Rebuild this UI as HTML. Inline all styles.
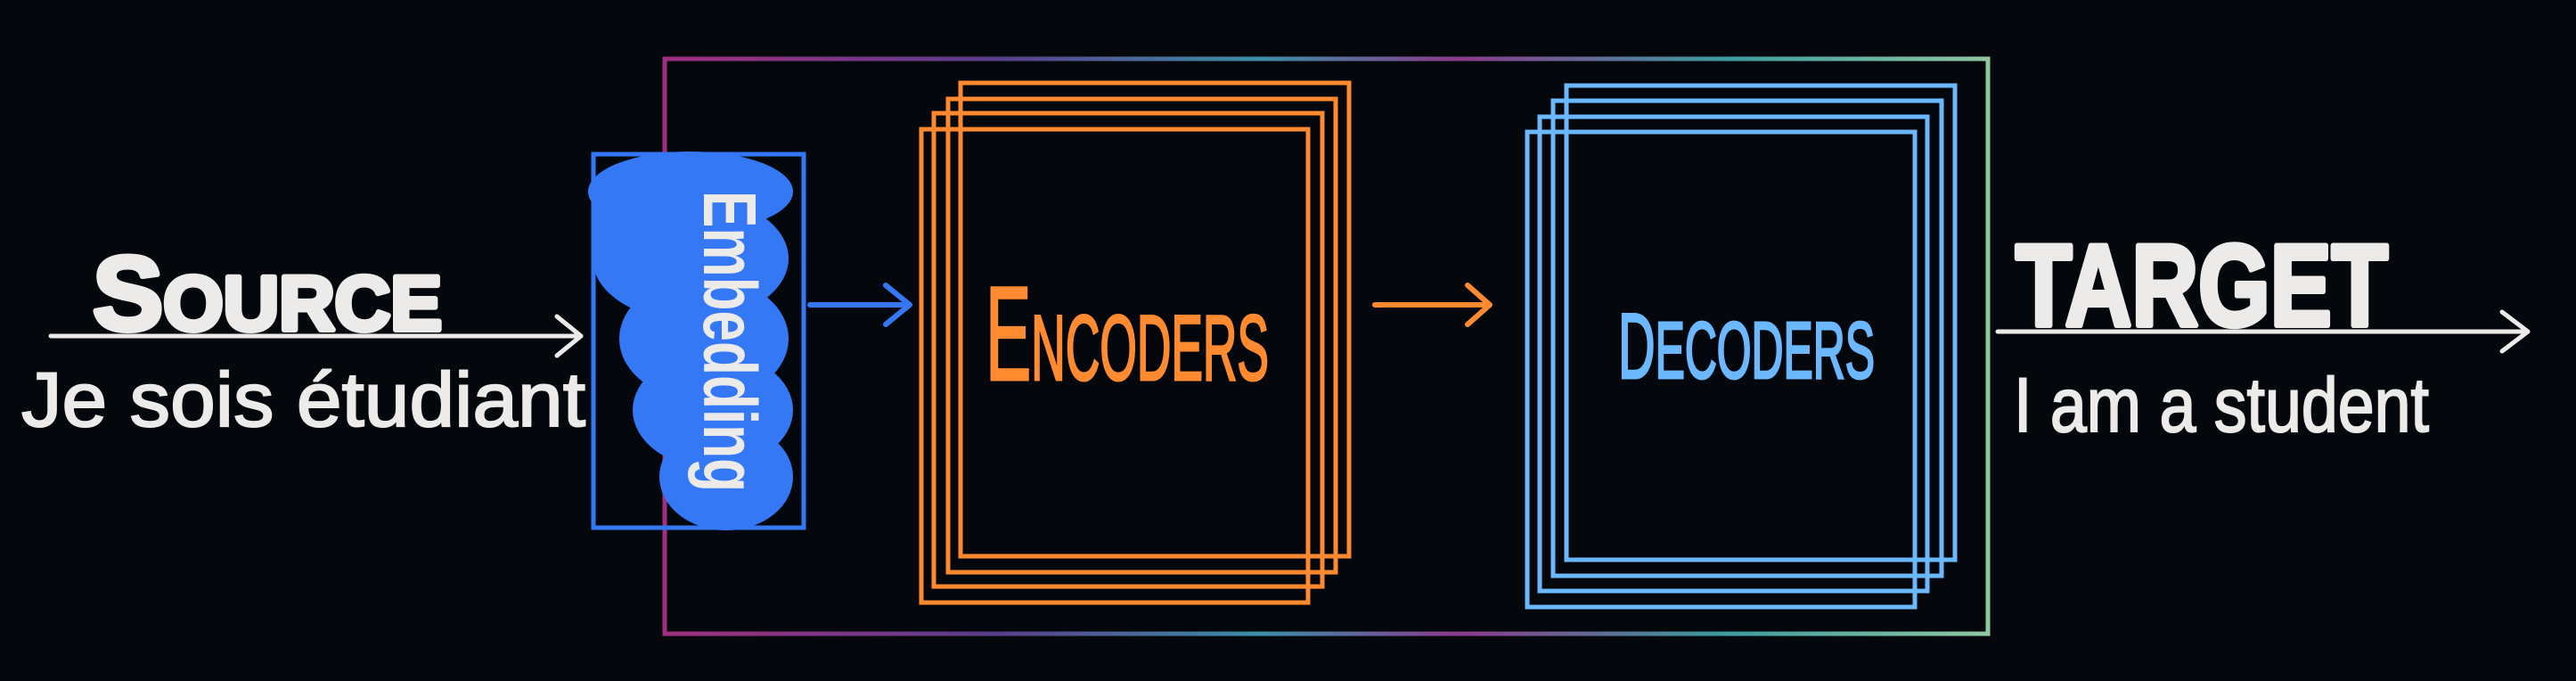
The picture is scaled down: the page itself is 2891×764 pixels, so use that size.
<!DOCTYPE html>
<html><head><meta charset="utf-8"><style>
html,body{margin:0;padding:0;background:#04070c;}
svg{display:block}
text{font-family:"Liberation Sans",sans-serif;}
</style></head><body>
<svg width="2891" height="764" viewBox="0 0 2891 764" xmlns="http://www.w3.org/2000/svg">
<defs>
<linearGradient id="fr" x1="0" x2="1" y1="0" y2="0">
<stop offset="0" stop-color="#a0307f"/><stop offset="0.25" stop-color="#5a3d8a"/><stop offset="0.45" stop-color="#3b8fa5"/><stop offset="0.6" stop-color="#8a3a8a"/><stop offset="0.8" stop-color="#3c9aa0"/><stop offset="1" stop-color="#8fc7a0"/>
</linearGradient>
</defs>
<rect width="2891" height="764" fill="#04070c"/>
<rect x="746" y="66" width="1485" height="645" fill="none" stroke="url(#fr)" stroke-width="5"/>
<line x1="746" y1="66" x2="746" y2="711" stroke="#a0307f" stroke-width="4"/>
<line x1="2231" y1="66" x2="2231" y2="711" stroke="#8fc7a0" stroke-width="4"/>
<!-- embedding blob -->
<g fill="#3578f6">
<ellipse cx="775" cy="215" rx="115" ry="45"/>
<ellipse cx="775" cy="290" rx="110" ry="70"/>
<ellipse cx="790" cy="380" rx="95" ry="70"/>
<ellipse cx="800" cy="460" rx="90" ry="65"/>
<ellipse cx="815" cy="535" rx="75" ry="60"/>
<ellipse cx="690" cy="250" rx="25" ry="60"/>
</g>
<rect x="666" y="173" width="236" height="419" fill="none" stroke="#3578f6" stroke-width="5"/>
<text transform="translate(790,214) rotate(90)" font-size="84" font-weight="bold" fill="#ecebea" textLength="338" lengthAdjust="spacingAndGlyphs">Embedding</text>
<g fill="none" stroke-width="6" stroke-linecap="round" stroke-linejoin="round">
<path d="M909 342H1021M994 320L1021 342L994 364" stroke="#3578f6"/>
<path d="M1543 342H1672M1647 320L1672 342L1647 364" stroke="#ff8a30"/>
<path d="M57 377H652M625 355L652 377L625 399" stroke="#ecebea" stroke-width="5"/>
<path d="M2242 372H2837M2808 350L2837 372L2808 394" stroke="#ecebea" stroke-width="5"/>
</g>
<g fill="none" stroke="#ff8a30" stroke-width="5">
<rect x="1078" y="93" width="436" height="531"/>
<rect x="1064" y="111" width="435" height="531"/>
<rect x="1048" y="127" width="436" height="531"/>
<rect x="1034" y="145" width="434" height="531"/>
</g>
<g fill="none" stroke="#6cb8ff" stroke-width="5">
<rect x="1758" y="96" width="436" height="532"/>
<rect x="1743" y="113" width="436" height="533"/>
<rect x="1728" y="131" width="435" height="532"/>
<rect x="1714" y="148" width="435" height="533"/>
</g>
<text x="1106" y="426" font-size="150" fill="#ff8a30" stroke="#ff8a30" stroke-width="3" textLength="318" lengthAdjust="spacingAndGlyphs">E<tspan font-size="104">NCODERS</tspan></text>
<text x="1816" y="424" font-size="104" fill="#6cb8ff" stroke="#6cb8ff" stroke-width="3" textLength="288" lengthAdjust="spacingAndGlyphs">D<tspan font-size="90">ECODERS</tspan></text>
<g fill="#ecebea" stroke="#ecebea" stroke-linejoin="round" stroke-width="6">
<text x="104" y="370" font-size="118" font-weight="bold" textLength="392" lengthAdjust="spacingAndGlyphs">S<tspan font-size="86">OURCE</tspan></text>
<text x="2262" y="365" font-size="130" font-weight="bold" textLength="418" lengthAdjust="spacingAndGlyphs">TARGET</text>
</g>
<g fill="#ecebea" stroke="#ecebea" stroke-width="2">
<text x="24" y="478" font-size="86" textLength="633" lengthAdjust="spacingAndGlyphs">Je sois étudiant</text>
<text x="2260" y="484" font-size="86" textLength="466" lengthAdjust="spacingAndGlyphs">I am a student</text>
</g>
</svg>
</body></html>
